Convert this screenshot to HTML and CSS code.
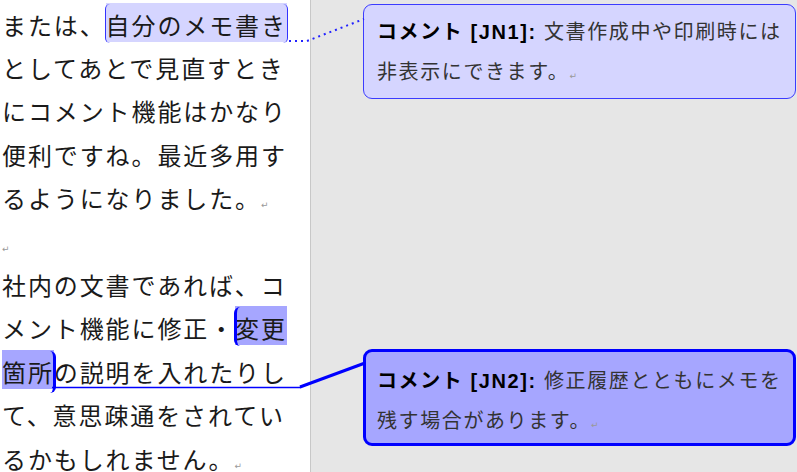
FILE: index.html
```html
<!DOCTYPE html>
<html>
<head>
    <meta charset="utf-8" />
    <title>コメント</title>
    <link rel="stylesheet" href="styles.css">
</head>
<body>
    <div class="sheet">
        <div class="page">
            <p class="para">または、<span class="mark mark1">自分のメモ書き</span><br>としてあとで見直すとき<br>にコメント機能はかなり<br>便利ですね。最近多用す<br>るようになりました。<span class="pm">↵</span></p>
            <p class="para"><span class="pm">↵</span></p>
            <p class="para">社内の文書であれば、コ<br>メント機能に修正・<span class="mark mark2 open">変更</span><br><span class="mark mark2 close">箇所</span>の説明を入れたりし<br>て、意思疎通をされてい<br>るかもしれません。<span class="pm">↵</span></p>
        </div>
        <div class="margin">
            <div class="balloon b1">
                <b class="label">コメント [JN1]:</b> 文書作成中や印刷時には<br>非表示にできます。<span class="pm">↵</span>
            </div>
            <div class="balloon b2">
                <b class="label">コメント [JN2]:</b> 修正履歴とともにメモを<br>残す場合があります。<span class="pm">↵</span>
            </div>
        </div>
        <svg class="links" width="797" height="472" viewBox="0 0 797 472">
            <polyline points="289,41 307,41 364,19" fill="none" stroke="#2222ff" stroke-width="2" stroke-dasharray="2 4" />
            <line x1="52" y1="387.5" x2="301" y2="387.5" stroke="#0000ff" stroke-width="1.5" />
            <line x1="300" y1="387" x2="365" y2="363" stroke="#0000ff" stroke-width="3" />
        </svg>
    </div>
</body>
</html>
```

FILE: styles.css
```css
body {
    margin: 0;
    overflow: hidden;
}

.sheet {
    position: relative;
    display: flex;
    width: 797px;
    height: 472px;
    overflow: hidden;
}

.page {
    flex: none;
    width: 311px;
    box-sizing: border-box;
    background: #fff;
    border-right: 1px solid #c8c8c8;
    padding: 2.5px 0 0 2px;
}

.para {
    margin: 0;
    font-family: "Noto Sans CJK JP", sans-serif;
    font-size: 24px;
    line-height: 43.4px;
    letter-spacing: 1.9px;
    color: #1a1a1a;
    white-space: nowrap;
}

.pm {
    font-family: "DejaVu Sans", sans-serif;
    font-size: 9px;
    line-height: 0;
    letter-spacing: 0;
    color: #999;
}

.mark {
    position: relative;
    padding-top: 4px;
}

.mark1 {
    background: #d5d5ff;
}

.mark2 {
    background: #a6a6ff;
}

.mark1::before,
.mark1::after,
.mark2.open::before,
.mark2.close::after {
    content: '';
    position: absolute;
    top: 1px;
    bottom: -1px;
    width: 5px;
}

.mark1::before {
    left: -1px;
    border-left: 1.5px solid #3333ff;
    border-radius: 5px 0 0 5px;
}

.mark1::after {
    right: -1px;
    border-right: 1.5px solid #3333ff;
    border-radius: 0 5px 5px 0;
}

.mark2.open::before {
    left: -1px;
    border-left: 3px solid #0000ff;
    border-radius: 6px 0 0 6px;
}

.mark2.close::after {
    right: -2px;
    bottom: -4px;
    border-right: 3px solid #0000ff;
    border-radius: 0 6px 6px 0;
}

.margin {
    flex: 1;
    background: #e6e6e6;
    padding: 4px 1px 0 52px;
}

.balloon {
    border-radius: 9px;
    font-family: "Liberation Sans", "Noto Sans CJK JP", sans-serif;
    font-size: 20px;
    line-height: 40px;
    letter-spacing: 1.6px;
    color: #333;
    white-space: nowrap;
}

.label {
    color: #000;
}

.b1 {
    background: #d5d5ff;
    border: 1px solid #3c3cff;
    padding: 7px 8px 6px 13px;
}

.b2 {
    background: #a6a6ff;
    border: 3px solid #0000ff;
    padding: 9px 8px 2px 11px;
    margin-top: 250px;
}

.links {
    position: absolute;
    left: 0;
    top: 0;
    pointer-events: none;
}
```
